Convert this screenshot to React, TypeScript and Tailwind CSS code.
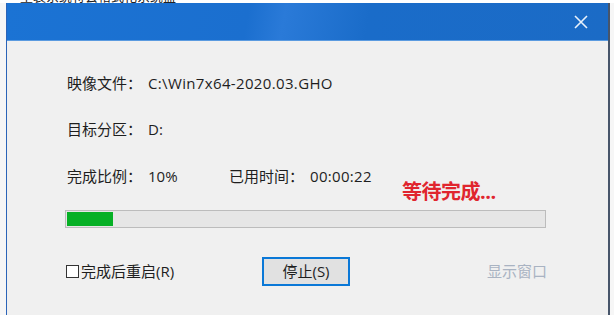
const font = "font-['Open_Sans','Noto_Sans_CJK_SC',sans-serif]";

function Row({ children }: { children: React.ReactNode }) {
  return <div className="flex h-[20px] items-center text-[15px] text-[#1e1e1e]">{children}</div>;
}

export default function App() {
  return (
    <div className={`relative h-[315px] w-[614px] overflow-hidden bg-[#f6f6f6] ${font}`}>
      {/* window behind, only a sliver shows */}
      <div className="flex h-[3px] items-end overflow-hidden bg-white pl-[20px]">
        <span className="text-[13px] leading-[13px] text-[#222]">重装系统将会格式化系统盘</span>
      </div>

      <div className="ml-[6px] flex h-[330px] w-[602px] flex-col border-l border-[#2b64b8] shadow-[2px_0_0_#47556a]">
        {/* title bar */}
        <div className="flex h-[37px] items-center justify-end bg-[linear-gradient(100deg,#1b73d4_0%,#1b6fcf_40%,#2a7ad8_46%,#1a6cc9_60%,#1b6bc6_100%)] pr-[20px]">
          <svg width="14" height="14" viewBox="0 0 14 14">
            <path d="M1 1 L13 13 M13 1 L1 13" stroke="#e8f1fb" strokeWidth="1.6" />
          </svg>
        </div>
        <div className="h-px bg-[#5b9be0]" />

        {/* body */}
        <div className="flex flex-1 flex-col bg-[#f0f0f0] pl-[60px] pt-[32px]">
          <Row>
            <span>映像文件：</span>
            <span className="ml-[6px] tracking-[0.35px]">C:\Win7x64-2020.03.GHO</span>
          </Row>
          <div className="mt-[26px]">
            <Row>
              <span>目标分区：</span>
              <span className="ml-[6px]">D:</span>
            </Row>
          </div>
          <div className="mt-[27px]">
            <Row>
              <span className="w-[81px]">完成比例：</span>
              <span className="w-[81px]">10%</span>
              <span>已用时间：</span>
              <span className="ml-[6px] tracking-[0.3px]">00:00:22</span>
            </Row>
          </div>
          <div className="mt-[-5px] ml-[335px] flex h-[22px] items-center text-[20px] font-bold tracking-[-0.5px] text-[#e0252e]">
            等待完成...
          </div>

          {/* progress */}
          <div className="ml-[-2px] mt-[7px] flex h-[18px] w-[481px] border border-[#bcbcbc] bg-[#e6e6e6] p-px">
            <div className="h-full w-[46px] bg-[#06b025]" />
          </div>

          {/* footer */}
          <div className="mt-[29px] flex h-[29px] w-[480px] items-center text-[15px] text-[#1e1e1e]">
            <div className="flex w-[195px] items-center">
              <span className="ml-[-1px] h-[13px] w-[13px] border border-[#333] bg-white" />
              <span className="ml-[2px]">完成后重启(R)</span>
            </div>
            <button className="flex h-[29px] w-[88px] items-center justify-center border-2 border-[#0a78d7] bg-[#e1e1e1] text-[15px] text-[#1e1e1e]">
              停止(S)
            </button>
            <span className="ml-auto text-[15px] text-[#a9b3c2]">显示窗口</span>
          </div>
        </div>
      </div>
    </div>
  );
}
